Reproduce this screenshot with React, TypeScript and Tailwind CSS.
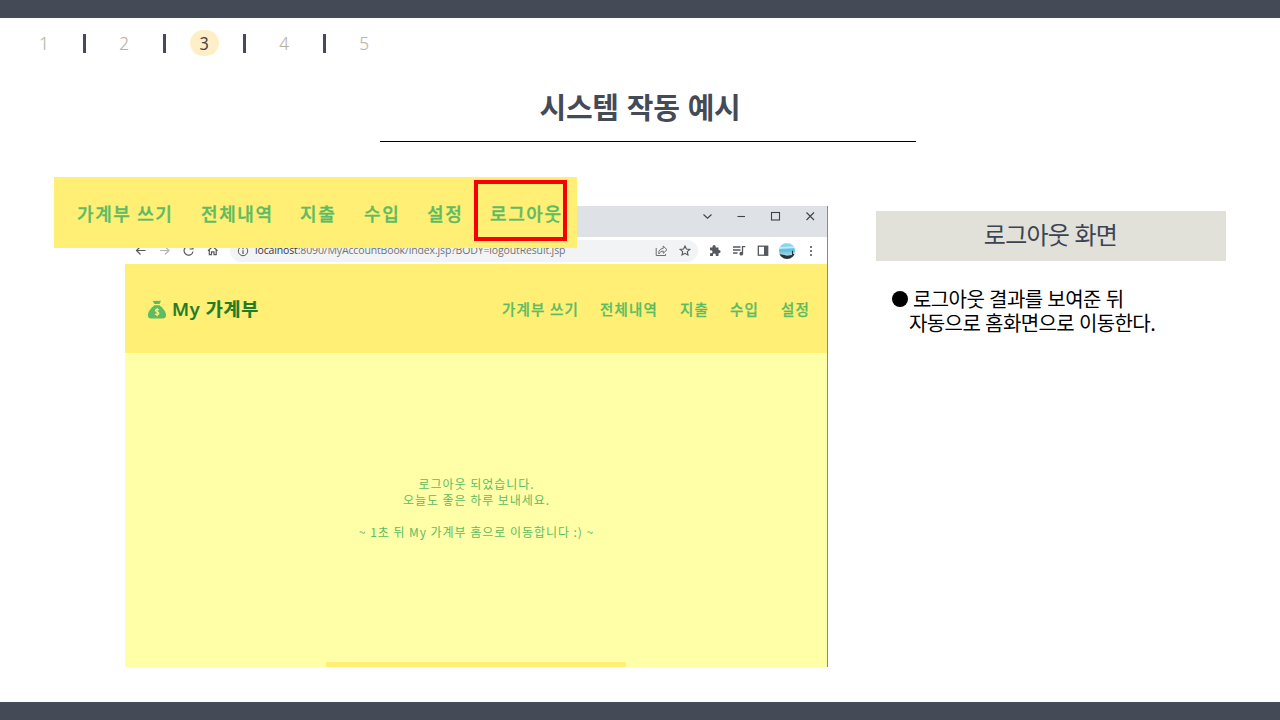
import { Fragment } from "react";

const steps = [1, 2, 3, 4, 5];

const zoomedMenu = [
  { label: "가계부 쓰기", width: "w-[124px]" },
  { label: "전체내역", width: "w-[99px]" },
  { label: "지출", width: "w-[64px]" },
  { label: "수입", width: "w-[63px]" },
  { label: "설정", width: "w-[63px]" },
  { label: "로그아웃", width: "w-[76px]" },
];

const pageMenu = [
  { label: "가계부 쓰기", width: "w-[98px]" },
  { label: "전체내역", width: "w-[80px]" },
  { label: "지출", width: "w-[50px]" },
  { label: "수입", width: "w-[51px]" },
  { label: "설정", width: "w-[32px]" },
];

function StepNav() {
  return (
    <nav className="flex h-[50px] items-center pl-6 font-['Noto_Sans','Noto_Sans_CJK_KR',sans-serif] text-[18px] font-light">
      {steps.map((n) => (
        <Fragment key={n}>
          {n > 1 && (
            <span className="flex w-10 justify-center">
              <span className="h-[19px] w-[3px] bg-[#444b54]" />
            </span>
          )}
          <span className="flex w-10 justify-center">
            <span
              className={
                n === 3
                  ? "flex h-[26px] w-[29px] items-center justify-center rounded-full bg-[#ffefc8] text-[#444444]"
                  : "text-[#b5b1a2]"
              }
            >
              <span className={n === 3 ? "scale-x-90 font-normal" : "inline-block scale-x-95 [-webkit-text-stroke:0.200px_#c9c6bb]"}>{n}</span>
            </span>
          </span>
        </Fragment>
      ))}
    </nav>
  );
}

function WindowButtons() {
  return (
    <svg className="mt-1 h-3 w-[120px]" viewBox="0 0 120 12" fill="none" stroke="#3f4348" strokeWidth="1.1">
      <path d="M3.500 4.500 7.500 8.200 11.500 4.500" />
      <path d="M37.500 6.500H45" />
      <rect x="71.500" y="2.500" width="8" height="7.500" />
      <path d="M106.500 2.500 114 10M114 2.500 106.500 10" />
    </svg>
  );
}

function NavigationIcons() {
  return (
    <svg className="h-4 w-[90px]" viewBox="0 0 90 16" fill="none" strokeWidth="1.200">
      <path stroke="#55585c" d="M11.500 7.500H2.500M6.500 3.500 2.500 7.500l4 4" />
      <path stroke="#b4b6b9" d="M26 7.500h9M31 3.500l4 4-4 4" />
      <path stroke="#55585c" d="M58.200 5A4.500 4.500 0 1 0 59 8.500M59 2.500v3.500h-3.500" />
      <path stroke="#55585c" d="M74 7.700 78.700 3.500 83.500 7.700M75.300 7V11.700H77.500V8.800H80V11.700H82.200V7" />
    </svg>
  );
}

function AddressActions() {
  return (
    <svg className="ml-auto h-[22px] w-[43px] shrink-0" viewBox="0 0 43 22" fill="none">
      <path
        d="M3.900 14V11.500C4.800 9 7 8.500 8.200 8.500V6L12 9.700 8.200 13.300V11C6.500 11 5 12 3.900 14M1.200 8V15.500H10.500V14"
        stroke="#6b6e72"
      />
      <path
        d="M30 6 31.400 9.100 34.800 9.400 32.300 11.700 33 15 30 13.300 27 15 27.700 11.700 25.200 9.400 28.600 9.100Z"
        stroke="#55585c"
        strokeWidth="1.100"
      />
    </svg>
  );
}

function ExtensionIcons() {
  return (
    <svg className="ml-[9px] h-[22px] w-[68px] shrink-0" viewBox="52 0 68 22" fill="none">
      <path
        d="M55 7.500H57.500V6.700a1.600 1.600 0 0 1 3.200 0V7.500H63.500V10H64a1.600 1.600 0 0 1 0 3.200H63.500V16H60.800V15a1.400 1.400 0 0 0-2.800 0V16H55V13.200H56a1.500 1.500 0 0 0 0-3H55Z"
        fill="#55585c"
      />
      <path d="M78 7H85.500M78 10H85.500M78 13H82.500M87.500 13.500V6.700H90.300" stroke="#55585c" strokeWidth="1.300" />
      <circle cx="86.300" cy="13.700" r="1.900" fill="#55585c" />
      <rect x="103.300" y="6.200" width="9.400" height="9" stroke="#55585c" strokeWidth="1.300" />
      <path d="M109 6h4v9.500h-4z" fill="#55585c" />
    </svg>
  );
}

function Avatar() {
  return (
    <svg className="h-4 w-4" viewBox="0 0 16 16">
      <defs>
        <clipPath id="avatar">
          <circle cx="8" cy="8" r="8" />
        </clipPath>
        <linearGradient id="sky" x1="0" y1="0" x2="0" y2="1">
          <stop offset="0" stopColor="#9bdcf5" />
          <stop offset="0.6" stopColor="#5cbfe0" />
          <stop offset="1" stopColor="#a9d3e2" />
        </linearGradient>
      </defs>
      <g clipPath="url(#avatar)">
        <path fill="url(#sky)" d="M0 0h16v12H0z" />
        <path fill="#c2ebf8" d="M0 4 16 3v2L0 6z" />
        <path fill="#2c3338" d="M0 11 8 12.500l5-.500V8l1-.500V11h2v5H0z" />
      </g>
    </svg>
  );
}

function MoneyBag() {
  return (
    <svg className="h-[19px] w-5" viewBox="0 0 20 19">
      <path fill="#5dbb63" d="M5.500.8C7.500 1.400 8.500.3 10 .8S12.500.8 14 .8L12.500 4H7.500Z" />
      <path fill="#5dbb63" d="M7.400 5.200H12.500C15.500 7.500 19 11.500 19 15.200C19 17.500 17.800 18.500 15.700 18.500H4.200C2.100 18.500.9 17.500.9 15.200C.9 11.500 4.500 7.500 7.400 5.200Z" />
      <path
        d="M11.900 10C11.400 9 8.400 8.900 8.400 10.600C8.400 12.300 11.900 11.500 11.900 13.400C11.900 15 8.700 15 8.200 13.800M10.100 8V16.200"
        fill="none"
        stroke="#ffef75"
        strokeWidth="1.200"
      />
    </svg>
  );
}

function BrowserWindow() {
  return (
    <section className="flex h-[461px] w-[703px] flex-col border-r border-[#8b8b78] bg-white">
      <div className="flex h-[31px] shrink-0 justify-end bg-[#dee1e6] pr-[7px]">
        <WindowButtons />
      </div>
      <div className="flex h-[27px] shrink-0 items-center pl-[9px]">
        <NavigationIcons />
        <div className="ml-[6px] flex h-[22px] w-[468px] shrink-0 items-center rounded-full bg-[#f1f3f4] pl-[7px]">
          <svg className="h-3 w-3 shrink-0" viewBox="0 0 12 12" fill="none" stroke="#55585c">
            <circle cx="6" cy="6" r="4.700" />
            <path d="M6 5.200V9M6 3v1.200" strokeWidth="1.200" />
          </svg>
          <span className="ml-[6px] pb-px whitespace-nowrap font-['Open_Sans',sans-serif] text-[10.500px] leading-4 tracking-[-0.140px] text-[#717477]">
            <span className="text-[#37393c]">localhost</span>:8090/MyAccountBook/index.jsp?BODY=logoutResult.jsp
          </span>
          <AddressActions />
        </div>
        <ExtensionIcons />
        <div className="ml-[4px]">
          <Avatar />
        </div>
        <svg className="ml-[14px] h-3 w-[4px]" viewBox="0 0 4 12" fill="#55585c">
          <circle cx="2" cy="2" r="1.100" />
          <circle cx="2" cy="6" r="1.100" />
          <circle cx="2" cy="10" r="1.100" />
        </svg>
      </div>
      <header className="flex h-[89px] shrink-0 items-center bg-[#ffef75] pt-px pl-[22px]">
        <MoneyBag />
        <h2 className="ml-[5px] w-[330px] whitespace-nowrap font-['Open_Sans','Noto_Sans_CJK_KR',sans-serif] text-[18.500px] leading-6 font-semibold tracking-[0.700px] text-[#237a28] [-webkit-text-stroke:0.200px_#237a28]">
          My 가계부
        </h2>
        <div className="flex text-[14.500px] leading-5 font-medium tracking-[1.200px] text-[#5dbb63] [-webkit-text-stroke:0.250px_#5dbb63]">
          {pageMenu.map((m) => (
            <span key={m.label} className={`${m.width} shrink-0 whitespace-nowrap`}>
              {m.label}
            </span>
          ))}
        </div>
      </header>
      <div className="flex flex-1 flex-col items-center justify-between bg-[#ffffa8] pt-[123px]">
        <p className="pl-px text-center text-[12px] leading-4 tracking-[0.960px] text-[#5dbb63]">
          로그아웃 되었습니다.
          <br />
          오늘도 좋은 하루 보내세요.
          <br />
          <br />
          ~ 1초 뒤 My 가계부 홈으로 이동합니다 :) ~
        </p>
        <div className="h-[5px] w-[300px] bg-[#ffef75]" />
      </div>
    </section>
  );
}

function ZoomedMenu() {
  return (
    <div className="absolute top-[-29px] left-[-71px] flex h-[71px] w-[523px] items-center bg-[#ffef75] pl-[23px] text-[18px] leading-6 font-medium tracking-[1.600px] text-[#5dbb63] [-webkit-text-stroke:0.350px_#5dbb63]">
      {zoomedMenu.map((m) => (
        <span key={m.label} className={`${m.width} shrink-0 whitespace-nowrap`}>
          {m.label}
        </span>
      ))}
      <div className="absolute top-[3px] left-[420px] h-[61px] w-[93px] border-4 border-[#f80000]" />
    </div>
  );
}

export default function App() {
  return (
    <div className="flex h-[720px] w-[1280px] flex-col overflow-hidden bg-white font-['Noto_Sans_CJK_KR',sans-serif]">
      <div className="h-[18px] shrink-0 bg-[#444a56]" />
      <StepNav />
      <div className="ml-[380px] flex h-[74px] w-[536px] flex-col border-b border-black pt-[18px] pr-4">
        <h1 className="text-center text-[29px] leading-10 font-bold tracking-[-0.350px] [word-spacing:2px] text-[#444a56]">
          시스템 작동 예시
        </h1>
      </div>
      <main className="flex flex-1 pt-16 pl-[125px]">
        <div className="relative h-[461px] w-[703px]">
          <BrowserWindow />
          <ZoomedMenu />
        </div>
        <aside className="ml-12 flex w-[350px] flex-col pt-[5px]">
          <h2 className="flex h-[50px] items-center justify-center bg-[#e1e0d9] pr-px pb-[5px] text-[24px] tracking-[-0.800px] [word-spacing:1px] text-[#3b4354]">
            로그아웃 화면
          </h2>
          <div className="flex pt-[26px] pl-4 text-[20px] leading-6 tracking-[-0.600px] text-black">
            <span className="mt-1 h-4 w-4 shrink-0 rounded-full bg-black" />
            <div className="flex flex-col pl-[5px] whitespace-nowrap [word-spacing:1px]">
              <p>로그아웃 결과를 보여준 뒤</p>
              <p className="-ml-1">자동으로 홈화면으로 이동한다.</p>
            </div>
          </div>
        </aside>
      </main>
      <div className="h-[18px] shrink-0 bg-[#444a56]" />
    </div>
  );
}
